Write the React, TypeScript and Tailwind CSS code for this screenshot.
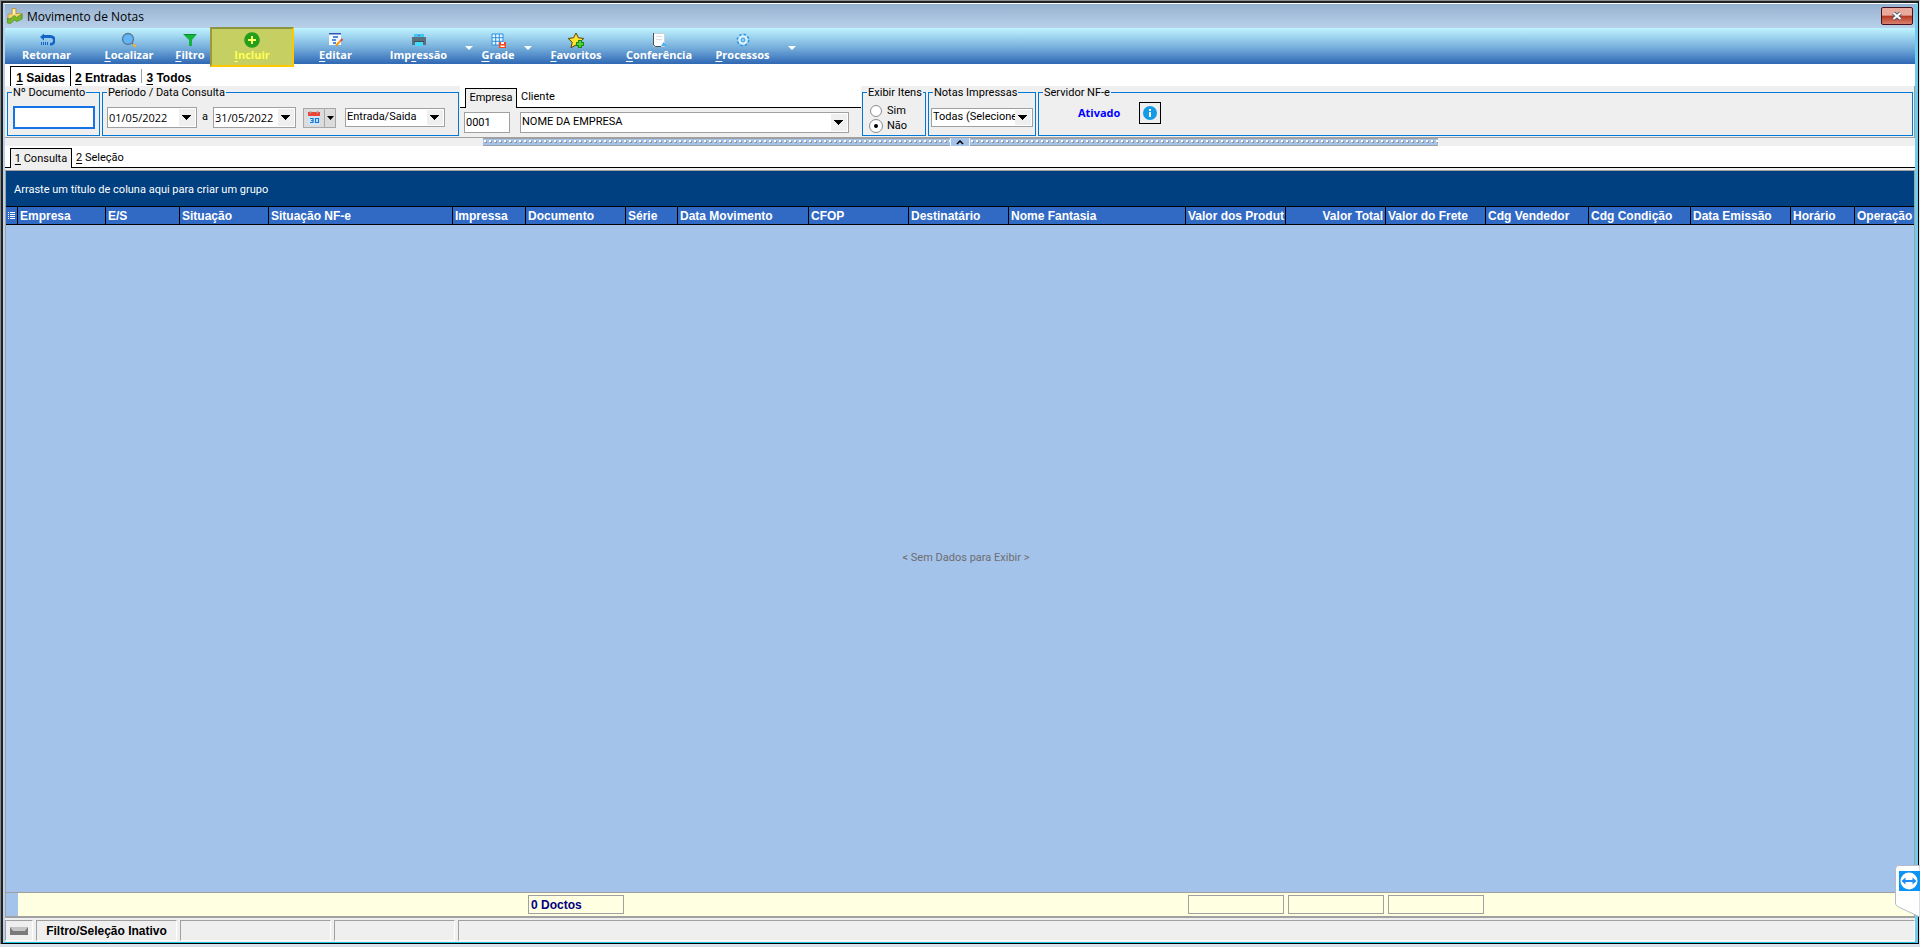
import React, { useState } from 'react'
import type { ReactNode } from 'react'

const columns = [
  { title: 'Empresa', width: 88 },
  { title: 'E/S', width: 74 },
  { title: 'Situação', width: 89 },
  { title: 'Situação NF-e', width: 184 },
  { title: 'Impressa', width: 73 },
  { title: 'Documento', width: 100 },
  { title: 'Série', width: 52 },
  { title: 'Data Movimento', width: 131 },
  { title: 'CFOP', width: 100 },
  { title: 'Destinatário', width: 100 },
  { title: 'Nome Fantasia', width: 177 },
  { title: 'Valor dos Produt', width: 100 },
  { title: 'Valor Total', width: 100, right: true },
  { title: 'Valor do Frete', width: 100 },
  { title: 'Cdg Vendedor', width: 103 },
  { title: 'Cdg Condição', width: 102 },
  { title: 'Data Emissão', width: 100 },
  { title: 'Horário', width: 64 },
  { title: 'Operação' },
]

const totals: Record<string, string> = {
  Documento: '0 Doctos',
  'Valor dos Produt': '',
  'Valor Total': '',
  'Valor do Frete': '',
}

/* Text with one underlined shortcut letter */
const Hot = ({ text, at = 0 }: { text: string; at?: number }) => (
  <span className="whitespace-pre">
    {text.slice(0, at)}
    <span className="underline underline-offset-2">{text[at]}</span>
    {text.slice(at + 1)}
  </span>
)

const Arrow = () => (
  <svg width="10" height="5" viewBox="0 0 10 5" shapeRendering="crispEdges" aria-hidden="true">
    <path d="M0 0h9L4.500 5z" fill="currentColor" />
  </svg>
)

const ReturnIcon = () => (
  <svg width="16" height="16" viewBox="0 0 16 16" aria-hidden="true">
    <path d="M1 5l4-3.500V3h6.500a3.500 3.500 0 0 1 0 10.500H11V11h.5a2 2 0 0 0 0-5H5v2.500z" fill="#1464c8" />
    <path d="M2.500 10v3M4.500 10v3M6.500 10v3M8.500 10v3" stroke="#1464c8" strokeWidth="1" />
  </svg>
)

const SearchIcon = () => (
  <svg width="16" height="16" viewBox="0 0 16 16" aria-hidden="true">
    <circle cx="7" cy="7" r="5.500" fill="#64b5f6" stroke="#5b7690" strokeWidth="1.300" />
    <path d="M11 11l1.500 1.500" stroke="#5b7690" strokeWidth="1.500" />
    <path d="M12 12l3 3" stroke="#f0b040" strokeWidth="2" />
  </svg>
)

const FilterIcon = () => (
  <svg width="16" height="16" viewBox="0 0 16 16" aria-hidden="true">
    <path d="M1 2h14l-5 6v6H7V8z" fill="#14b43c" />
    <path d="M2 2h12l-1 1H3z" fill="#0b8f2c" />
  </svg>
)

const AddIcon = () => (
  <svg width="16" height="16" viewBox="0 0 16 16" aria-hidden="true">
    <circle cx="8" cy="8" r="7.800" fill="#239f1c" />
    <path d="M8 4v8M4 8h8" stroke="#ffff66" strokeWidth="2" />
  </svg>
)

const EditIcon = () => (
  <svg width="16" height="16" viewBox="0 0 16 16" aria-hidden="true">
    <path d="M1 2h12v11H1z" fill="#f4f8ff" />
    <path d="M1 1h12v1.500H1z" fill="#3553b4" />
    <path d="M5 5h5M4 8h4M5 11h3" stroke="#1d66d6" strokeWidth="1.500" />
    <path d="M8 13.500l4.500-4.500" stroke="#ff9800" strokeWidth="2" />
    <path d="M12.500 9l2-2" stroke="#e0464a" strokeWidth="2" />
  </svg>
)

const PrintIcon = () => (
  <svg width="16" height="16" viewBox="0 0 16 16" aria-hidden="true">
    <path d="M3 2h10v4H3z" fill="#38c9f2" />
    <path d="M7 3h2v1H7z" fill="#9a4fd0" />
    <path d="M1 5h14v8H1z" fill="#5e6f7c" />
    <path d="M4 10h8v4H4z" fill="#3fdcff" />
    <path d="M3 9h10v1H3z" fill="#3f4d57" />
  </svg>
)

const GridIcon = () => (
  <svg width="16" height="16" viewBox="0 0 16 16" aria-hidden="true">
    <path d="M2 2h11v11H2z" fill="#eaf6ff" />
    <path d="M2 2h11v11H2zM5.700 2v11M9.300 2v11M2 5.700h11M2 9.300h11" stroke="#2a8fe0" fill="none" />
    <path d="M9 10h7v6H9z" fill="#f4481e" />
    <path d="M11 10h3v2h-3zM10.500 13.500h4v1.500h-4z" fill="#fff" />
  </svg>
)

const StarIcon = () => (
  <svg width="18" height="17" viewBox="0 0 18 17" aria-hidden="true">
    <path
      d="M9 1l2.400 4.800 5.400.7-4 3.600 1.200 5.600L9 13l-5 2.700 1.200-5.600-4-3.600 5.400-.7z"
      fill="#ffe32e"
      stroke="#5a4408"
      strokeWidth="1"
    />
    <path d="M13 8v8M9 12h8" stroke="#188a14" strokeWidth="4" />
    <path d="M13 9v6M10 12h6" stroke="#4fd23c" strokeWidth="2" />
  </svg>
)

const PageIcon = () => (
  <svg width="16" height="16" viewBox="0 0 16 16" aria-hidden="true">
    <path d="M2.500 1.500h11v13h-11z" fill="#fdfdfd" stroke="#c9d0d6" />
    <path d="M2.500 1v12l2 1.500H10" stroke="#4b4f55" fill="none" />
    <path d="M5 4.500h6M5 7.500h6" stroke="#d9dde2" />
    <path d="M10 14l2.500-4 3.500 4z" fill="#4bb2f4" />
  </svg>
)

const GearIcon = () => (
  <svg width="16" height="16" viewBox="0 0 16 16" aria-hidden="true">
    <circle cx="8" cy="8" r="5.500" fill="none" stroke="#2f96e0" strokeWidth="2" strokeDasharray="2.300 2" />
    <circle cx="8" cy="8" r="3.800" fill="#f2faff" stroke="#d9f0ff" strokeWidth="2" />
    <circle cx="8" cy="8" r="2" fill="#8fd0f6" stroke="#2f96e0" />
  </svg>
)

const ToolButton = ({ icon, text, at, width }: { icon: ReactNode; text: string; at?: number; width: string }) => (
  <button className={`flex h-9 shrink-0 flex-col items-center pt-1 text-white ${width}`}>
    <span className="flex h-4 items-center">{icon}</span>
    <span className="font-['Open_Sans',sans-serif] text-[11px] leading-[14px] font-bold">
      {at === undefined ? text : <Hot text={text} at={at} />}
    </span>
  </button>
)

const DropButton = ({ label, width }: { label: string; width: string }) => (
  <button aria-label={label} className={`flex h-9 shrink-0 items-center justify-center pt-1 text-white ${width}`}>
    <svg width="8" height="4" viewBox="0 0 8 4" aria-hidden="true">
      <path d="M0 0h8L4 4z" fill="currentColor" />
    </svg>
  </button>
)

const Group = ({ title, width, children }: { title: string; width: string; children: ReactNode }) => (
  <fieldset className={`h-[50px] min-w-0 border border-[#0078d7] px-1 ${width}`}>
    <legend className="h-[13px] px-px text-[11px] leading-[13px] whitespace-nowrap">{title}</legend>
    {children}
  </fieldset>
)

const DateBox = ({ label, value, width }: { label: string; value: string; width: string }) => (
  <div className={`flex h-[21px] border border-[#a0a0a0] bg-white p-px ${width}`}>
    <input
      aria-label={label}
      defaultValue={value}
      className="h-full min-w-0 flex-1 font-['Open_Sans',sans-serif] text-[11px] outline-none"
    />
    <button aria-label={`Abrir ${label}`} className="flex w-4 items-center justify-center bg-[#efefef]">
      <Arrow />
    </button>
  </div>
)

const Combo = ({ label, value, width, height }: { label: string; value: string; width: string; height: string }) => (
  <div className={`relative ${width}`}>
    <select
      aria-label={label}
      className={`block w-full appearance-none border border-[#a0a0a0] bg-white pl-px outline-none ${height}`}
    >
      <option>{value}</option>
    </select>
    <span className="pointer-events-none absolute inset-y-[2px] right-[2px] flex w-4 items-center justify-center bg-[#efefef]">
      <Arrow />
    </span>
  </div>
)

const SplitterGrip = () => (
  <svg className="h-2 flex-1 border-y border-[#a0a0a0] bg-[#a4c3eb]" height="8" aria-hidden="true">
    <defs>
      <pattern id="grip" width="5" height="6" patternUnits="userSpaceOnUse">
        <rect x="2" y="2" width="2" height="2" fill="#8f9296" />
        <rect x="1" y="1" width="2" height="2" fill="#fff" />
      </pattern>
    </defs>
    <rect width="100%" height="6" fill="url(#grip)" shapeRendering="crispEdges" />
  </svg>
)

const StatusPanel = ({ width, children }: { width: string; children?: ReactNode }) => (
  <div
    className={`flex h-[21px] items-center border border-t-[#a0a0a0] border-r-white border-b-white border-l-[#a0a0a0] ${width}`}
  >
    {children}
  </div>
)

const App = () => {
  const [showItems, setShowItems] = useState('Não')

  return (
    <div className="flex min-h-screen flex-col bg-[#d9e2ec] pb-[3px] font-['Roboto',sans-serif] text-[11px] text-black">
      <div className="flex flex-1 flex-col border-t border-r border-l border-[#8c8c8c] border-r-[#dfe6ee]">
        <div className="flex flex-1 flex-col border-t-2 border-r border-b border-l-2 border-[#1c2226] border-r-black border-b-black">
          <div className="flex flex-1 flex-col border-t border-r-3 border-b border-l-2 border-t-white border-r-[#6fcdec] border-b-[#20c4e6] border-l-[#b9d1ea]">
            {/* Title bar */}
            <header className="flex h-6 items-center bg-linear-to-b from-[#96b1d0] to-[#b9d1ea] pr-[2px] pl-[2px]">
              <svg width="16" height="16" viewBox="0 0 16 16" aria-hidden="true">
                <path d="M5 .5h4v5h6v5H1V6h4z" fill="#f0d272" stroke="#b08c30" strokeWidth="0.700" />
                <path d="M6 1.500h2v5H6z" fill="#fff3bc" />
                <path d="M.5 15v-5l2 1.500 5-4 2 2L15 6v5l-5 2.500-2.500-1.500-4 3.500z" fill="#76b82a" stroke="#4c8a18" strokeWidth="0.700" />
              </svg>
              <h1 className="ml-1 flex-1 pt-[2px] font-['Open_Sans',sans-serif] text-xs">Movimento de Notas</h1>
              <button
                aria-label="Fechar"
                className="flex h-[18px] w-8 items-center justify-center rounded-[2px] border border-[#43101c] bg-linear-to-b from-[#e9a99c] from-45% via-[#b5351c] via-50% to-[#d98070]"
              >
                <svg width="12" height="10" viewBox="0 0 12 10" aria-hidden="true">
                  <path d="M2.500 2l7 6M9.500 2l-7 6" stroke="#4f5a66" strokeWidth="4" />
                  <path d="M2.500 2l7 6M9.500 2l-7 6" stroke="#fff" strokeWidth="2" />
                </svg>
              </button>
            </header>

            {/* Toolbar */}
            <div className="flex h-9 bg-linear-to-b from-[#c0f4ff] via-[#76aedb] via-55% to-[#2f68b4]">
              <ToolButton icon={<ReturnIcon />} text="Retornar" width="w-[83px]" />
              <ToolButton icon={<SearchIcon />} text="Localizar" at={0} width="w-[82px]" />
              <ToolButton icon={<FilterIcon />} text="Filtro" at={0} width="w-[40px]" />
              <button className="relative z-10 -mt-px flex h-[40px] w-[84px] shrink-0 flex-col items-center border-2 border-t-[#8c9640] border-r-[#fcc800] border-b-[#fcc800] border-l-[#a0963c] bg-[#c6cf61] pt-[3px] text-[#ffff55]">
                <AddIcon />
                <span className="font-['Open_Sans',sans-serif] text-[11px] leading-[14px] font-bold">
                  <Hot text="Incluir" />
                </span>
              </button>
              <ToolButton icon={<EditIcon />} text="Editar" at={0} width="w-[83px]" />
              <ToolButton icon={<PrintIcon />} text="Impressão" at={3} width="w-[83px]" />
              <DropButton label="Opções de impressão" width="w-[17px]" />
              <ToolButton icon={<GridIcon />} text="Grade" at={0} width="w-[42px]" />
              <DropButton label="Opções de grade" width="w-[18px]" />
              <ToolButton icon={<StarIcon />} text="Favoritos" at={0} width="w-[78px]" />
              <ToolButton icon={<PageIcon />} text="Conferência" at={0} width="w-[88px]" />
              <ToolButton icon={<GearIcon />} text="Processos" at={0} width="w-[79px]" />
              <DropButton label="Opções de processos" width="w-[20px]" />
            </div>

            {/* Movement tabs */}
            <nav className="flex h-[22px] items-end bg-white pl-[5px] font-['Liberation_Sans',sans-serif] text-xs font-bold">
              <button className="h-5 w-[61px] border-x border-t border-black bg-white pt-[3px]">
                <Hot text="1 Saidas" />
              </button>
              <button className="h-5 px-1 pt-1">
                <Hot text="2 Entradas" />
              </button>
              <span className="mb-[3px] ml-px h-[14px] w-px bg-[#a0a0a0]" />
              <button className="h-5 px-1 pt-1">
                <Hot text="3 Todos" />
              </button>
            </nav>

            {/* Filters */}
            <section className="flex h-[52px] gap-[2px] border-r border-b border-[#a0a0a0] bg-[#efefef] pr-px pl-[2px]">
              <Group title="Nº Documento" width="w-[93px]">
                <input
                  aria-label="Nº Documento"
                  autoFocus
                  className="mt-[7px] ml-px block h-[23px] w-[82px] border-2 border-[#1473e6] bg-white pl-px outline-none"
                />
              </Group>
              <Group title="Período / Data Consulta" width="w-[357px]">
                <div className="flex items-center pt-2">
                  <DateBox label="Data inicial" value="01/05/2022" width="w-[90px]" />
                  <span className="w-4 text-center">a</span>
                  <DateBox label="Data final" value="31/05/2022" width="w-[83px]" />
                  <div className="ml-[7px] flex h-5 w-[33px] border border-[#a8a8a8] bg-[#dcdcdc]">
                    <button aria-label="Calendário" className="flex w-5 items-center justify-center">
                      <svg width="14" height="14" viewBox="0 0 14 14" aria-hidden="true">
                        <path d="M1 1h12v13H1z" fill="#cfe6fa" />
                        <path d="M1 1h12v4H1z" fill="#ee4436" />
                        <path d="M3.500 0v2.500M10.500 0v2.500" stroke="#9aa4ac" strokeWidth="1.500" />
                        <path
                          d="M3 7.500h3v4H3M4 9.500h2M8.500 7.500h3v4h-3z"
                          stroke="#1976d2"
                          strokeWidth="1.200"
                          fill="none"
                        />
                      </svg>
                    </button>
                    <button
                      aria-label="Opções do calendário"
                      className="flex flex-1 items-center justify-center border-l border-[#a8a8a8]"
                    >
                      <svg width="7" height="4" viewBox="0 0 7 4" aria-hidden="true">
                        <path d="M0 0h7L3.500 4z" />
                      </svg>
                    </button>
                  </div>
                  <div className="ml-[9px]">
                    <Combo label="Tipo de data" value="Entrada/Saida" width="w-[100px]" height="h-[19px]" />
                  </div>
                </div>
              </Group>

              <div className="-ml-px flex w-[401px] flex-col">
                <div className="flex h-[22px] items-end bg-white">
                  <span className="w-[5px] self-stretch border-b border-black" />
                  <button className="h-5 w-[52px] border-x border-t border-black bg-[#efefef]">Empresa</button>
                  <button className="flex-1 self-stretch border-b border-black pt-[2px] pl-1 text-left">Cliente</button>
                </div>
                <div className="flex gap-[10px] pt-1 pl-1">
                  <input
                    aria-label="Código da empresa"
                    defaultValue="0001"
                    className="h-[21px] w-[46px] border border-[#a0a0a0] bg-white pl-px text-[11px] outline-none"
                  />
                  <div className="text-[11px]">
                    <Combo label="Empresa" value="NOME DA EMPRESA" width="w-[329px]" height="h-[21px]" />
                  </div>
                </div>
              </div>

              <div className="-ml-px">
                <Group title="Exibir Itens" width="w-[64px]">
                  <div className="flex flex-col gap-px pt-[5px] pl-[3px]">
                    {['Sim', 'Não'].map((option) => (
                      <label key={option} className="flex h-[14px] items-center gap-[5px]">
                        <input
                          type="radio"
                          name="items"
                          checked={showItems === option}
                          onChange={() => setShowItems(option)}
                          className="size-3 appearance-none rounded-full border border-[#8c8c8c] bg-white checked:border-4 checked:border-white checked:bg-black checked:outline checked:outline-[#8c8c8c]"
                        />
                        {option}
                      </label>
                    ))}
                  </div>
                </Group>
              </div>
              <Group title="Notas Impressas" width="w-[108px]">
                <div className="-mx-[2px] pt-[9px]">
                  <Combo label="Notas impressas" value="Todas (Selecione" width="w-[102px]" height="h-[19px]" />
                </div>
              </Group>
              <Group title="Servidor NF-e" width="flex-1">
                <div className="flex items-center gap-[19px] pt-[3px] pl-[35px]">
                  <span className="font-['Open_Sans',sans-serif] font-bold text-[#0000ff]">Ativado</span>
                  <button
                    aria-label="Informações do servidor"
                    className="flex size-[22px] items-center justify-center border border-black"
                  >
                    <svg width="14" height="14" viewBox="0 0 14 14" aria-hidden="true">
                      <circle cx="7" cy="7" r="7" fill="#149be6" />
                      <path d="M6 3h2v2H6zM6 6h2v5H6z" fill="#fff" />
                    </svg>
                  </button>
                </div>
              </Group>
            </section>

            {/* Splitter */}
            <div className="flex h-2 justify-center bg-[#efefef]">
              <div className="flex w-1/2">
                <SplitterGrip />
                <button
                  aria-label="Recolher filtros"
                  className="mx-px flex w-[18px] items-center justify-center bg-[#a4c3eb]"
                >
                  <svg width="8" height="5" viewBox="0 0 8 5" aria-hidden="true">
                    <path d="M1 4l3-3 3 3" stroke="#000" strokeWidth="1.500" fill="none" />
                  </svg>
                </button>
                <SplitterGrip />
              </div>
            </div>

            {/* Query tabs */}
            <nav className="flex h-[22px] items-end bg-white">
              <span className="w-[5px] self-stretch border-b border-black" />
              <button className="h-5 w-[62px] border-x border-t border-black bg-[#efefef] pt-px">
                <Hot text="1 Consulta" />
              </button>
              <button className="flex-1 self-stretch border-b border-black pt-1 pl-1 text-left">
                <Hot text="2 Seleção" />
              </button>
            </nav>

            {/* Data grid */}
            <main className="flex flex-1 flex-col bg-[#efefef] pt-[2px]">
              <div className="flex flex-1 flex-col border border-b-2 border-[#a0a0a0] bg-[#a4c3eb]">
                <p className="h-[35px] bg-[#004080] pl-2 leading-[37px] text-white">
                  Arraste um título de coluna aqui para criar um grupo
                </p>
                <table className="w-full table-fixed border-separate border-spacing-0 font-['Liberation_Sans',sans-serif]">
                  <colgroup>
                    <col className="w-3" />
                    {columns.map((column) => (
                      <col key={column.title} style={{ width: column.width }} />
                    ))}
                  </colgroup>
                  <thead>
                    <tr className="h-[19px] bg-[#316ac5] text-xs text-white">
                      <th className="border-y border-r border-black p-0" aria-label="Colunas">
                        <svg width="7" height="9" viewBox="0 0 7 9" className="mx-auto" aria-hidden="true">
                          <path d="M0 1.500h1M2 1.500h5M0 3.500h1M2 3.500h5M0 5.500h1M2 5.500h5M0 7.500h1M2 7.500h5" stroke="#fff" />
                        </svg>
                      </th>
                      {columns.map((column) => (
                        <th
                          key={column.title}
                          className={`overflow-hidden border-y border-r border-black px-[2px] py-0 leading-4 whitespace-nowrap last:border-r-0 ${column.right ? 'text-right' : 'text-left'}`}
                        >
                          {column.title}
                        </th>
                      ))}
                    </tr>
                  </thead>
                </table>
                <div className="flex flex-1 items-center justify-center pl-3 text-[#6d6d6d]">
                  &lt; Sem Dados para Exibir &gt;
                </div>
                <div className="flex h-6 border-t border-[#a0a0a0] bg-[#ffffe1] font-['Liberation_Sans',sans-serif]">
                  <span className="w-3 shrink-0 bg-[#a4c3eb]" />
                  {columns.map((column) => (
                    <div
                      key={column.title}
                      className="shrink-0 px-[2px] pt-[2px]"
                      style={{ width: column.width }}
                    >
                      {column.title in totals && (
                        <div className="h-[19px] border border-[#a0a0a0] pl-[2px] text-xs leading-[18px] font-bold text-[#000080]">
                          {totals[column.title]}
                        </div>
                      )}
                    </div>
                  ))}
                </div>
              </div>
            </main>

            {/* Status bar */}
            <footer className="flex gap-[3px] bg-[#efefef] pt-[2px] pb-px font-['Liberation_Sans',sans-serif] text-xs font-bold">
              <StatusPanel width="w-[28px]">
                <svg width="18" height="8" viewBox="0 0 18 8" className="mx-auto" aria-hidden="true">
                  <path d="M0 0h18v8H0z" fill="#7a7a7a" />
                  <path d="M0 0h18l-3 4H3z" fill="#c4c4c4" />
                </svg>
              </StatusPanel>
              <StatusPanel width="w-[141px] justify-center">Filtro/Seleção Inativo</StatusPanel>
              <StatusPanel width="w-[151px]" />
              <StatusPanel width="w-[121px]" />
              <StatusPanel width="flex-1" />
            </footer>
          </div>
        </div>
      </div>

      {/* Remote session tab docked to the window edge */}
      <button aria-label="Painel remoto" className="fixed right-0 bottom-[30px]">
        <svg width="25" height="52" viewBox="0 0 25 52" aria-hidden="true">
          <path d="M25 .5H4a3.500 3.500 0 0 0-3.500 3.500v34q0 2 2 3.500L25 52z" fill="#fff" stroke="#b4bccc" />
          <path d="M4 6h21v20H4z" fill="#0c94f4" />
          <circle cx="14" cy="16" r="8.500" fill="#fff" />
          <path d="M6.500 16l4-3.500v2.500h7v-2.500l4 3.500-4 3.500V17h-7v2.500z" fill="#1c8cf0" />
        </svg>
      </button>
    </div>
  )
}

export default App
